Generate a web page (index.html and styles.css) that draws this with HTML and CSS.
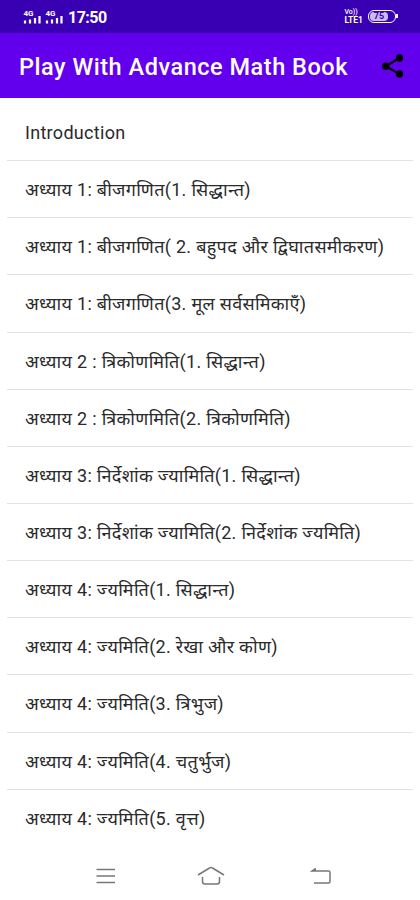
FILE: index.html
```
<!DOCTYPE html>
<html lang="hi">
<head>
  <meta charset="UTF-8">
  <meta name="viewport" content="width=device-width, initial-scale=1.0">
  <title>Play With Advance Math Book</title>
  <link rel="stylesheet" href="styles.css">
</head>
<body>

  <div class="status-bar">
    <svg class="signal" width="42" height="18" viewBox="0 0 42 18">
      <g id="sim">
        <text x="0.500" y="7.500">4G</text>
        <path d="M2 15.500v-3M7 15.500v-4M12 15.500v-5.500M16.500 15.500v-7.500"/>
      </g>
      <use href="#sim" x="22"/>
    </svg>
    <span class="clock">17:50</span>
    <div class="volte"><span>Vo))</span><span>LTE1</span></div>
    <div class="battery"><span>75</span></div>
  </div>

  <header class="toolbar">
    <h1>Play With Advance Math Book</h1>
    <svg class="share" width="24" height="26" viewBox="0 0 24 26">
      <path d="M18.500 4L4.700 12.200L18.500 20" fill="none" stroke="#000" stroke-width="2.200"/>
      <circle cx="18.500" cy="4" r="3.700"/>
      <circle cx="4.700" cy="12.200" r="3.700"/>
      <circle cx="18.500" cy="20" r="3.700"/>
    </svg>
  </header>

  <ul class="chapters">
    <li><span>Introduction</span></li>
    <li><span>अध्याय 1: बीजगणित(1. सिद्धान्त)</span></li>
    <li><span>अध्याय 1: बीजगणित( 2. बहुपद और द्विघातसमीकरण)</span></li>
    <li><span>अध्याय 1: बीजगणित(3. मूल सर्वसमिकाएँ)</span></li>
    <li><span>अध्याय 2 : त्रिकोणमिति(1. सिद्धान्त)</span></li>
    <li><span>अध्याय 2 : त्रिकोणमिति(2. त्रिकोणमिति)</span></li>
    <li><span>अध्याय 3: निर्देशांक ज्यामिति(1. सिद्धान्त)</span></li>
    <li><span>अध्याय 3: निर्देशांक ज्यामिति(2. निर्देशांक ज्यमिति)</span></li>
    <li><span>अध्याय 4: ज्यमिति(1. सिद्धान्त)</span></li>
    <li><span>अध्याय 4: ज्यमिति(2. रेखा और कोण)</span></li>
    <li><span>अध्याय 4: ज्यमिति(3. त्रिभुज)</span></li>
    <li><span>अध्याय 4: ज्यमिति(4. चतुर्भुज)</span></li>
    <li><span>अध्याय 4: ज्यमिति(5. वृत्त)</span></li>
  </ul>

  <nav class="nav-bar">
    <svg width="22" height="20" viewBox="0 0 22 20"><path d="M1.500 3.500h18.500M1.500 10h18.500M1.500 16.500h18.500"/></svg>
    <svg class="home" width="28" height="20" viewBox="0 0 28 20"><path d="M1 9L12.500 2Q14 1 15.500 2L27 9M5.500 11v4.500q0 2.500 2.500 2.500h12q2.500 0 2.500-2.500V11"/></svg>
    <svg width="22" height="20" viewBox="0 0 22 20"><path d="M5.500 2.500L2 5H18.500q1.500 0 1.500 1.500v9q0 1.500-1.500 1.500H4"/><path d="M1.500 5L6 2v3z" fill="#777" stroke="none"/></svg>
  </nav>

</body>
</html>
```
FILE: styles.css
```
* {
  box-sizing: border-box;
  margin: 0;
  padding: 0;
}

body {
  width: 420px;
  height: 900px;
  overflow: hidden;
  background-color: #fff;
  font-family: Roboto, "Noto Sans", sans-serif;
  color: #2a2a2a;
}

.status-bar {
  display: flex;
  align-items: center;
  height: 33px;
  padding: 0 22px 0 23px;
  background-color: #3900b3;
  color: #fff;
}

.signal {
  stroke: #fff;
  stroke-width: 2.200;
}

.signal text {
  font-size: 8px;
  font-weight: 700;
  fill: #fff;
  stroke: none;
}

.clock {
  margin: 2px 0 0 3px;
  font-size: 16px;
  font-weight: 700;
  letter-spacing: -0.5px;
}

.volte {
  margin: 0 0 0 auto;
  font-size: 7px;
  font-weight: 500;
  line-height: 8px;
}

.volte span {
  display: block;
}

.volte span:last-child {
  font-size: 8.500px;
  font-weight: 700;
  line-height: 9px;
}

.battery {
  position: relative;
  width: 28px;
  height: 13px;
  margin: 0 2px 0 5px;
  padding: 1px;
  border: 1.500px solid #fff;
  border-radius: 6px;
}

.battery::after {
  content: "";
  position: absolute;
  top: 3px;
  right: -3px;
  width: 2px;
  height: 4px;
  background-color: #fff;
}

.battery span {
  display: block;
  width: 18px;
  height: 9px;
  border-radius: 4px;
  background-color: #cbbcf0;
  color: #3900b3;
  font-size: 9px;
  font-weight: 700;
  line-height: 9px;
  text-align: center;
}

.toolbar {
  display: flex;
  align-items: center;
  justify-content: space-between;
  height: 65px;
  padding: 3px 15px 0 19px;
  background-color: #6200ee;
}

.toolbar h1 {
  color: #fff;
  font-size: 23.500px;
  font-weight: 500;
  letter-spacing: 0.530px;
  white-space: nowrap;
}

.chapters {
  height: 754px;
  padding: 6px 7px 0;
  list-style: none;
}

.chapters li {
  display: flex;
  align-items: center;
  height: 57.150px;
  padding-left: 18px;
  border-bottom: 1px solid #e2e2e2;
  font-size: 18px;
  letter-spacing: 0.300px;
  white-space: nowrap;
}

.chapters li:last-child {
  border-bottom: none;
}

.nav-bar {
  display: flex;
  align-items: center;
  justify-content: space-between;
  height: 48px;
  padding: 0 88px 0 95px;
}

.nav-bar svg {
  fill: none;
  stroke: #777;
  stroke-width: 1.500;
}

.nav-bar .home {
  margin-right: 6px;
}
```
